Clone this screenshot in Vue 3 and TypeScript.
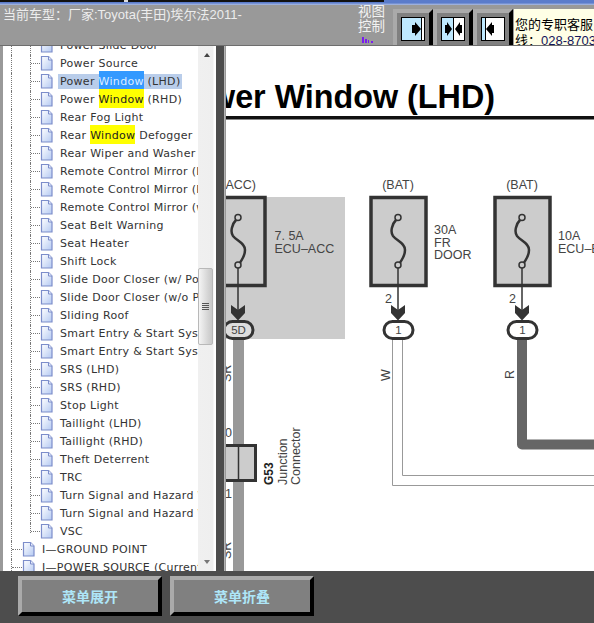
<script setup lang="ts">
type Mark = 'active' | 'hit';

interface TreeRow {
  label: string;
  after?: string;
  before?: string;
  mark?: Mark;
  selected?: boolean;
}

const children: TreeRow[] = [
  { label: 'Power Slide Door' },
  { label: 'Power Source' },
  { before: 'Power ', label: 'Window', after: ' (LHD)', mark: 'active', selected: true },
  { before: 'Power ', label: 'Window', after: ' (RHD)', mark: 'hit' },
  { label: 'Rear Fog Light' },
  { before: 'Rear ', label: 'Window', after: ' Defogger', mark: 'hit' },
  { label: 'Rear Wiper and Washer' },
  { label: 'Remote Control Mirror (LHD)' },
  { label: 'Remote Control Mirror (RHD)' },
  { label: 'Remote Control Mirror (w/' },
  { label: 'Seat Belt Warning' },
  { label: 'Seat Heater' },
  { label: 'Shift Lock' },
  { label: 'Slide Door Closer (w/ Power' },
  { label: 'Slide Door Closer (w/o Power' },
  { label: 'Sliding Roof' },
  { label: 'Smart Entry & Start System' },
  { label: 'Smart Entry & Start System' },
  { label: 'SRS (LHD)' },
  { label: 'SRS (RHD)' },
  { label: 'Stop Light' },
  { label: 'Taillight (LHD)' },
  { label: 'Taillight (RHD)' },
  { label: 'Theft Deterrent' },
  { label: 'TRC' },
  { label: 'Turn Signal and Hazard Warning' },
  { label: 'Turn Signal and Hazard Warning' },
  { label: 'VSC' },
];

const roots = ['I—GROUND POINT', 'J—POWER SOURCE (Current Flow)'];

const fuses = [
  { x: 238, box: 210, lines: ['7. 5A', 'ECU–ACC'], lineX: 274.5, lineY: 240, pin: '', pill: '5D', source: '(ACC)' },
  { x: 398, box: 371, lines: ['30A', 'FR', 'DOOR'], lineX: 434, lineY: 234, pin: '2', pill: '1', source: '(BAT)' },
  { x: 522, box: 495, lines: ['10A', 'ECU–B'], lineX: 558, lineY: 240, pin: '2', pill: '1', source: '(BAT)' },
];
</script>

<template>
  <div class="app">
    <div class="strip">
      <i class="strip-dark"></i>
      <i class="strip-gap"></i>
      <i class="strip-dark strip-dark--wide"></i>
    </div>

    <header class="header">
      <div class="car">当前车型：厂家:Toyota(丰田)埃尔法2011-</div>
      <div class="view-label">
        <span>视图</span>
        <span>控制</span>
        <svg class="view-mark" width="14" height="6" viewBox="0 0 14 6">
          <path d="M1 0h2v6H1zM4 2h2v4H4zM7 3h1v3H7zM10 4h2v2h-2z" fill="#7a1cf0" />
        </svg>
      </div>
      <button class="view-btn" type="button">
        <svg width="24" height="24" viewBox="0 0 24 24">
          <rect x="0.5" y="0.5" width="23" height="23" fill="#bfe9ff" stroke="#000" />
          <rect x="20" y="1" width="3" height="22" fill="#fff" />
          <path d="M20.5 1v22" stroke="#000" />
          <path d="M11 8h3V5l6 7-6 7v-3h-3z" fill="#000" />
        </svg>
      </button>
      <button class="view-btn" type="button">
        <svg width="24" height="24" viewBox="0 0 24 24">
          <rect x="0.5" y="0.5" width="23" height="23" fill="#fff" stroke="#000" />
          <rect x="1" y="1" width="11" height="22" fill="#bfe9ff" />
          <path d="M12.5 1v22" stroke="#000" />
          <path d="M4 8h2V5l5 7-5 7v-3H4zM21 8h-2V5l-5 7 5 7v-3h2z" fill="#000" />
        </svg>
      </button>
      <button class="view-btn" type="button">
        <svg width="24" height="24" viewBox="0 0 24 24">
          <rect x="0.5" y="0.5" width="23" height="23" fill="#fff" stroke="#000" />
          <rect x="1" y="1" width="3" height="22" fill="#bfe9ff" />
          <path d="M4.5 1v22" stroke="#000" />
          <path d="M13 8h-2V5l-6 7 6 7v-3h2z" fill="#000" />
        </svg>
      </button>
      <div class="service">
        <div>您的专职客服</div>
        <div>线：<span class="service-tel">028-8703</span></div>
      </div>
    </header>

    <main class="main">
      <section class="tree">
        <div class="tree-list">
          <div v-for="(row, i) in children" :key="i" class="row">
            <span class="guide"></span>
            <span class="elbow" :class="{ 'elbow--last': i === children.length - 1 }"><i class="dash"></i></span>
            <svg class="doc" width="13" height="15" viewBox="0 0 13 15">
              <use href="#tree-doc" />
            </svg>
            <span class="label" :class="{ 'label--selected': row.selected }">
              <template v-if="row.before">{{ row.before }}</template><mark
                v-if="row.mark"
                class="mark"
                :class="`mark--${row.mark}`"
              >{{ row.label }}</mark><template v-else>{{ row.label }}</template><template v-if="row.after">{{ row.after }}</template>
            </span>
          </div>
          <div v-for="root in roots" :key="root" class="row">
            <span class="elbow elbow--root"><i class="dash"></i></span>
            <svg class="doc" width="13" height="15" viewBox="0 0 13 15">
              <use href="#tree-doc" />
            </svg>
            <span class="label">{{ root }}</span>
          </div>
        </div>
        <div class="scrollbar">
          <i class="arrow arrow--up"></i>
          <div class="thumb"><i></i><i></i><i></i><i></i></div>
          <i class="arrow arrow--down"></i>
        </div>
      </section>

      <div class="divider"></div>

      <section class="sheet">
        <svg class="diagram" width="368" height="525" viewBox="226 46 368 525">
          <defs>
            <linearGradient id="doc-fill" x1="0" y1="0" x2="1" y2="1">
              <stop offset="0" stop-color="#ffffff" />
              <stop offset="1" stop-color="#b4c9f2" />
            </linearGradient>
            <symbol id="tree-doc" viewBox="0 0 13 15">
              <path d="M1.5 .5h7l3.5 3.5v10h-10.500z" fill="url(#doc-fill)" stroke="#7c8dca" stroke-width="1.200" />
              <path d="M8.500 .5v3.500h3.500" fill="#e8eefb" stroke="#7c8dca" />
            </symbol>
          </defs>

          <text class="title" x="495" y="108" text-anchor="end">Power Window (LHD)</text>
          <rect x="226" y="116" width="368" height="3.500" fill="#111" />

          <rect x="226" y="197" width="119" height="142" fill="#ccc" />

          <path d="M238.500 339V572" stroke="#999" stroke-width="11" fill="none" />
          <path d="M392.500 339V485.500H594M402.500 339V475.500H594" stroke="#999" fill="none" />
          <path d="M522 339V444.500H594" stroke="#666" stroke-width="10" stroke-linejoin="round" fill="none" />

          <g v-for="fuse in fuses" :key="fuse.x" class="fuse">
            <text class="small" :x="fuse.x - (fuse.pill === '5D' ? -18 : 0)" y="189" :text-anchor="fuse.pill === '5D' ? 'end' : 'middle'">{{ fuse.source }}</text>
            <rect :x="fuse.box" y="197.500" width="55" height="88" fill="#ccc" stroke="#333" stroke-width="3.500" />
            <path
              :transform="`translate(${fuse.x} 0)`"
              d="M-2 220C-6 224-8 232-5 236C-1 241 7 243 7 250C7 257 3 260 2 263"
              fill="none"
              stroke="#333"
              stroke-width="2.500"
            />
            <circle :cx="fuse.x" cy="217.500" r="3" fill="#ccc" stroke="#333" stroke-width="1.500" />
            <circle :cx="fuse.x" cy="265" r="3" fill="#ccc" stroke="#333" stroke-width="1.500" />
            <path :d="`M${fuse.x} 268V312`" stroke="#333" stroke-width="1.500" />
            <path :transform="`translate(${fuse.x} 0)`" d="M-7 305L0 310L7 305V313L0 320.500L-7 313Z" fill="#333" />
            <text v-if="fuse.pin" class="small" :x="fuse.x - 13" y="302.500">{{ fuse.pin }}</text>
            <rect
              :x="fuse.x - 14"
              y="321.500"
              width="29"
              height="17"
              rx="8.500"
              :fill="fuse.pill === '5D' ? '#ddd' : '#fff'"
              stroke="#333"
              stroke-width="3"
            />
            <text class="pill" :x="fuse.x + 0.5" y="334" text-anchor="middle">{{ fuse.pill }}</text>
            <text v-for="(line, i) in fuse.lines" :key="line" class="small" :x="fuse.lineX" :y="fuse.lineY + i * 12.5">{{ line }}</text>
          </g>

          <rect x="210" y="445.500" width="45.500" height="35" fill="#ccc" stroke="#333" stroke-width="3" />
          <path d="M238.500 445V481" stroke="#333" stroke-width="1.500" />

          <text class="small" x="232" y="437" text-anchor="end">10</text>
          <text class="small" x="232" y="498" text-anchor="end">11</text>
          <text class="small" transform="translate(231 382) rotate(-90)">SR</text>
          <text class="small" transform="translate(231 559) rotate(-90)">SR</text>
          <text class="small" transform="translate(389.500 381) rotate(-90)">W</text>
          <text class="small" transform="translate(514 379) rotate(-90)">R</text>
          <text class="code" transform="translate(272.500 485) rotate(-90)">G53</text>
          <text class="small" transform="translate(287 485) rotate(-90)">Junction</text>
          <text class="small" transform="translate(300 485) rotate(-90)">Connector</text>
        </svg>
      </section>
    </main>

    <footer class="footer">
      <button class="menu-btn" type="button">菜单展开</button>
      <button class="menu-btn" type="button">菜单折叠</button>
    </footer>
  </div>
</template>

<style scoped>
.app {
  width: 594px;
  height: 623px;
  overflow: hidden;
  display: flex;
  flex-direction: column;
  background: #999;
  font-family: 'Liberation Sans', 'Noto Sans CJK SC', sans-serif;
}

.strip {
  height: 5px;
  flex: none;
  display: flex;
  background: linear-gradient(#5b7ccb 0, #5b7ccb 3px, #8fa6dc 4px, #aab9dc 5px);
}

.strip-dark {
  display: block;
  width: 124px;
  height: 2px;
  background: #111;
}

.strip-dark--wide {
  width: 256px;
}

.strip-gap {
  display: block;
  width: 4px;
  height: 2px;
  background: #ddd;
}

.header {
  height: 41px;
  flex: none;
  box-sizing: border-box;
  display: flex;
  overflow: hidden;
  background: #999;
  border-bottom: 1px solid #6e6e6e;
}

.car {
  flex: 1;
  padding: 2px 0 0 3px;
  font-size: 13px;
  line-height: 15px;
  color: #ececec;
  white-space: nowrap;
}

.view-label {
  width: 35px;
  display: flex;
  flex-direction: column;
  font-size: 13.500px;
  line-height: 14.500px;
  color: #f2f2f2;
}

.view-mark {
  display: block;
  margin: 3px 0 0 3px;
}

.view-btn {
  width: 40px;
  height: 40px;
  flex: none;
  box-sizing: border-box;
  margin-top: 4px;
  padding: 0;
  display: flex;
  align-items: center;
  justify-content: center;
  background: #808080;
  border-width: 4px;
  border-style: solid;
  border-color: #aaa #000 #aaa #aaa;
}

.view-btn svg {
  display: block;
}

.service {
  width: 80px;
  flex: none;
  margin: 4px 0 0 1px;
  padding: 8px 0 0 1px;
  box-sizing: border-box;
  background: #ffffe6;
  color: #000;
  font-size: 13px;
  line-height: 16px;
  white-space: nowrap;
}

.service-tel {
  color: #14145c;
}

.main {
  flex: 1;
  min-height: 0;
  display: flex;
}

.tree {
  width: 213px;
  margin-left: 3px;
  display: flex;
  height: 525px;
  background: #fff;
  flex: none;
}

.tree-list {
  width: 195px;
  overflow: hidden;
  flex: none;
}

.row {
  height: 18px;
  display: flex;
  align-items: flex-start;
  padding-left: 8px;
  font-family: 'DejaVu Sans', 'Noto Sans', sans-serif;
  font-size: 11px;
  letter-spacing: 0.3px;
  color: #333;
  white-space: nowrap;
}

.row:first-child {
  margin-top: -9px;
}

.guide {
  width: 19px;
  height: 18px;
  flex: none;
  box-sizing: border-box;
  border-left: 1px dotted #777;
}

.elbow {
  width: 10px;
  height: 18px;
  flex: none;
  box-sizing: border-box;
  border-left: 1px dotted #777;
}

.elbow--last {
  height: 10px;
}

.elbow--root {
  width: 11px;
}

.dash {
  display: block;
  height: 9px;
  box-sizing: border-box;
  border-bottom: 1px dotted #777;
}

.doc {
  flex: none;
  margin-top: 1px;
  display: block;
}

.label {
  margin-left: 7px;
  line-height: 17px;
  height: 18px;
}

.label--selected {
  background: linear-gradient(transparent 1px, #b9cdea 1px, #b9cdea 16px, transparent 16px);
  padding: 0 2px;
  margin-left: 5px;
}

.mark {
  display: inline-block;
  box-sizing: border-box;
  height: 19px;
  margin-top: -2px;
  padding-top: 2px;
  line-height: 17px;
  color: #222;
  vertical-align: top;
}

.mark--hit {
  background: #ff0;
}

.mark--active {
  background: #39f;
  color: #dcecff;
}

.scrollbar {
  width: 18px;
  flex: none;
  box-sizing: border-box;
  padding-top: 7px;
  display: flex;
  flex-direction: column;
  align-items: flex-start;
  background: linear-gradient(90deg, #f0f0f0 0, #efefef 15px, #fff 16px);
}

.arrow {
  display: block;
  width: 0;
  height: 0;
  margin-left: 6px;
  border-left: 3px solid transparent;
  border-right: 3px solid transparent;
}

.arrow--up {
  border-bottom: 4px solid #444;
}

.arrow--down {
  border-top: 4px solid #777;
  margin-top: 215px;
}

.thumb {
  width: 15px;
  height: 77px;
  box-sizing: border-box;
  margin-top: 211px;
  border: 1px solid #b8b8b8;
  border-radius: 2px;
  background: linear-gradient(90deg, #f4f4f4, #d4d4d4 70%, #c8c8c8);
  display: flex;
  flex-direction: column;
  align-items: center;
  justify-content: center;
  gap: 1px;
}

.thumb i {
  display: block;
  width: 7px;
  height: 1px;
  background: #555;
}

.divider {
  width: 9px;
  flex: none;
  box-sizing: border-box;
  background: #4d4d4d;
  border-right: 1px solid #b5b5b5;
  height: 525px;
}

.sheet {
  flex: 1;
  min-width: 0;
  overflow: hidden;
  background: #fff;
  margin-left: 1px;
  height: 525px;
}

.diagram {
  display: block;
}

.title {
  font-family: 'Liberation Sans', sans-serif;
  font-size: 32.300px;
  font-weight: 700;
  fill: #000;
}

.small {
  font-family: 'Liberation Sans', sans-serif;
  font-size: 12.500px;
  fill: #444;
}

.pill {
  font-family: 'Liberation Sans', sans-serif;
  font-size: 11.500px;
  fill: #444;
}

.code {
  font-family: 'Liberation Sans', sans-serif;
  font-size: 12px;
  font-weight: 700;
  fill: #222;
}

.footer {
  height: 52px;
  flex: none;
  box-sizing: border-box;
  display: flex;
  gap: 8px;
  padding: 5px 0 0 18px;
  background: #4d4d4d;
}

.menu-btn {
  width: 144px;
  height: 40px;
  box-sizing: border-box;
  padding: 0;
  background: #808080;
  border-width: 4px;
  border-style: solid;
  border-color: #aaa #000 #000 #aaa;
  font-family: 'Liberation Sans', 'Noto Sans CJK SC', sans-serif;
  font-size: 14px;
  font-weight: 700;
  color: #aee6f8;
}
</style>

<style>
html,
body {
  margin: 0;
  overflow: hidden;
}
</style>
